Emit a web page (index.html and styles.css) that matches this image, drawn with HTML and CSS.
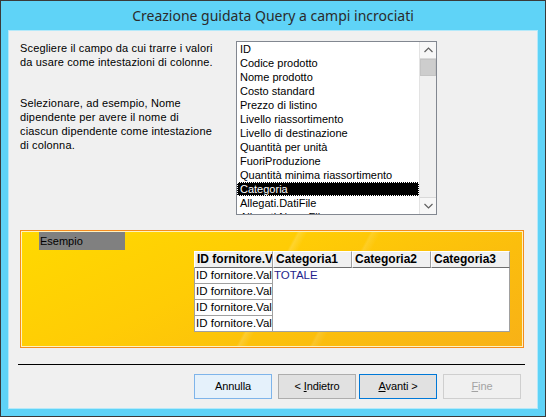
FILE: index.html
```html
<!DOCTYPE html>
<html lang="it">
<head>
<meta charset="utf-8">
<title>Creazione guidata Query a campi incrociati</title>
<link rel="stylesheet" href="styles.css">
</head>
<body>
<div class="window">
  <div class="titlebar">Creazione guidata Query a campi incrociati</div>
  <div class="client">
    <div class="top">
      <div class="desc">
        <p>Scegliere il campo da cui trarre i valori<br>da usare come intestazioni di colonne.</p>
        <p class="p2">Selezionare, ad esempio, Nome<br>dipendente per avere il nome di<br>ciascun dipendente come intestazione<br>di colonna.</p>
      </div>
      <div class="listbox">
        <ul class="items">
          <li>ID</li>
          <li>Codice prodotto</li>
          <li>Nome prodotto</li>
          <li>Costo standard</li>
          <li>Prezzo di listino</li>
          <li>Livello riassortimento</li>
          <li>Livello di destinazione</li>
          <li>Quantità per unità</li>
          <li>FuoriProduzione</li>
          <li>Quantità minima riassortimento</li>
          <li class="selected">Categoria</li>
          <li>Allegati.DatiFile</li>
          <li>Allegati.NomeFile</li>
        </ul>
        <div class="scrollbar">
          <div class="sb-btn">
            <svg width="9" height="6" viewBox="0 0 9 6"><path d="M0.5 5 L4.5 1 L8.5 5" fill="none" stroke="#606060" stroke-width="1.2"/></svg>
          </div>
          <div class="sb-thumb"></div>
          <div class="sb-track"></div>
          <div class="sb-btn sb-down">
            <svg width="9" height="6" viewBox="0 0 9 6"><path d="M0.5 1 L4.5 5 L8.5 1" fill="none" stroke="#606060" stroke-width="1.2"/></svg>
          </div>
        </div>
      </div>
    </div>

    <div class="sample">
      <div class="sample-label">Esempio</div>
      <div class="grid">
        <div class="hcell">ID fornitore.Valore</div>
        <div class="hcell">Categoria1</div>
        <div class="hcell">Categoria2</div>
        <div class="hcell">Categoria3</div>
        <div class="rcell r1">ID fornitore.Valore</div>
        <div class="rcell r2">ID fornitore.Valore</div>
        <div class="rcell r3">ID fornitore.Valore</div>
        <div class="rcell r4">ID fornitore.Valore</div>
        <div class="data">TOTALE</div>
      </div>
    </div>

    <div class="sep"></div>

    <div class="buttons">
      <div class="btn hover">Annulla</div>
      <div class="btn gap6">&lt; <u>I</u>ndietro</div>
      <div class="btn default gap3"><u>A</u>vanti &gt;</div>
      <div class="btn disabled gap6"><u>F</u>ine</div>
    </div>
  </div>
</div>
</body>
</html>
```

FILE: styles.css
```css
* { box-sizing: border-box; }

body {
  margin: 0;
  background: #ffffff;
}

.window {
  width: 546px;
  height: 417px;
  border: 1px solid #3a3a3a;
  background: #5fd3f7;
  display: flex;
  flex-direction: column;
}

.titlebar {
  height: 29px;
  line-height: 30px;
  text-align: center;
  font-family: "Noto Sans", "Open Sans", sans-serif;
  font-size: 14px;
  color: #2b2b2b;
}

.client {
  margin: 0 7px;
  height: 379px;
  background: #f0f0f0;
  border: 1px solid #b4e9fa;
  font-family: "Liberation Sans", Arial, sans-serif;
  font-size: 11px;
  color: #000;
}

.top {
  display: flex;
  padding: 10px 0 0 11px;
}

.desc {
  width: 216px;
  line-height: 14px;
  letter-spacing: 0.15px;
}

.desc p {
  margin: 0;
}

.desc .p2 {
  margin-top: 27px;
}

.listbox {
  width: 201px;
  height: 174px;
  border: 1px solid #828790;
  background: #fff;
  display: flex;
}

.items {
  flex: 1;
  list-style: none;
  margin: 0;
  padding: 0;
  overflow: hidden;
}

.items li {
  height: 14px;
  line-height: 14px;
  padding-left: 3px;
  white-space: nowrap;
}

.items li.selected {
  background: #000;
  color: #fff;
  outline: 1px dotted #ffffff;
  outline-offset: -1px;
}

.scrollbar {
  width: 17px;
  display: flex;
  flex-direction: column;
  background: #f0f0f0;
  border-left: 1px solid #e3e3e3;
}

.sb-btn {
  height: 17px;
  display: flex;
  align-items: center;
  justify-content: center;
  background: #f7f7f7;
  border-bottom: 1px solid #d9d9d9;
}

.sb-down {
  border-bottom: none;
  border-top: 1px solid #d9d9d9;
}

.sb-thumb {
  height: 17px;
  background: #cdcdcd;
  border: 1px solid #c4c4c4;
}

.sb-track {
  flex: 1;
}

.sample {
  margin: 15px 0 0 11px;
  width: 504px;
  height: 118px;
  border: 1px solid #f58d1d;
  box-shadow: inset 0 0 0 1px #fff2c0;
  padding: 1px;
  background:
    linear-gradient(118deg, transparent 49%, rgba(255,255,255,0.16) 49.5%, transparent 51%),
    linear-gradient(118deg, transparent 62%, rgba(255,255,255,0.12) 62.5%, transparent 64%),
    linear-gradient(155deg, #ffd900 0%, #ffcc05 40%, #fbbe0d 70%, #f8b117 100%);
}

.sample-label {
  margin: 0 0 0 17px;
  width: 86px;
  height: 18px;
  line-height: 18px;
  padding-left: 1px;
  background: #808080;
  color: #000;
}

.grid {
  margin: 1px 0 0 172px;
  display: grid;
  grid-template-columns: 79px 79px 79px 79px;
  grid-template-rows: 17px 16px 16px 16px 16px;
  width: 316px;
}

.hcell {
  background: #f0f0f0;
  border-top: 1px solid #ffffff;
  border-left: 1px solid #ffffff;
  border-right: 1px solid #a0a0a0;
  border-bottom: 1px solid #6d6d6d;
  font-weight: bold;
  font-size: 12px;
  line-height: 15px;
  padding-left: 2px;
  white-space: nowrap;
  overflow: hidden;
}

.rcell {
  grid-column: 1;
  background: #fff;
  border-left: 1px solid #a0a0a0;
  border-right: 1px solid #a0a0a0;
  border-bottom: 1px solid #a0a0a0;
  font-size: 11.5px;
  line-height: 15px;
  padding-left: 1px;
  white-space: nowrap;
  overflow: hidden;
}

.r1 { grid-row: 2; }
.r2 { grid-row: 3; }
.r3 { grid-row: 4; }
.r4 { grid-row: 5; }

.data {
  grid-column: 2 / 5;
  grid-row: 2 / 6;
  background: #fff;
  border-right: 1px solid #a0a0a0;
  border-bottom: 1px solid #a0a0a0;
  color: #1f1f8c;
  font-size: 11.5px;
  line-height: 15px;
  padding-left: 1px;
}

.sep {
  margin: 16px 0 0 9px;
  width: 507px;
  height: 1px;
  background: #000;
}

.buttons {
  display: flex;
  margin: 9px 0 0 185px;
}

.btn {
  width: 78px;
  height: 25px;
  line-height: 23px;
  text-align: center;
  border: 1px solid #adadad;
  background: #e1e1e1;
  color: #000;
  letter-spacing: -0.1px;
}

.btn u {
  text-decoration: underline;
  text-underline-offset: 1px;
}

.btn.hover {
  background: #e5f1fb;
  border-color: #7eb4ea;
}

.btn.default {
  border-color: #0078d7;
}

.btn.disabled {
  background: #f0f0f0;
  border-color: #cfcfcf;
  color: #a3a3a3;
}

.gap6 { margin-left: 6px; }
.gap3 { margin-left: 3px; }
```
